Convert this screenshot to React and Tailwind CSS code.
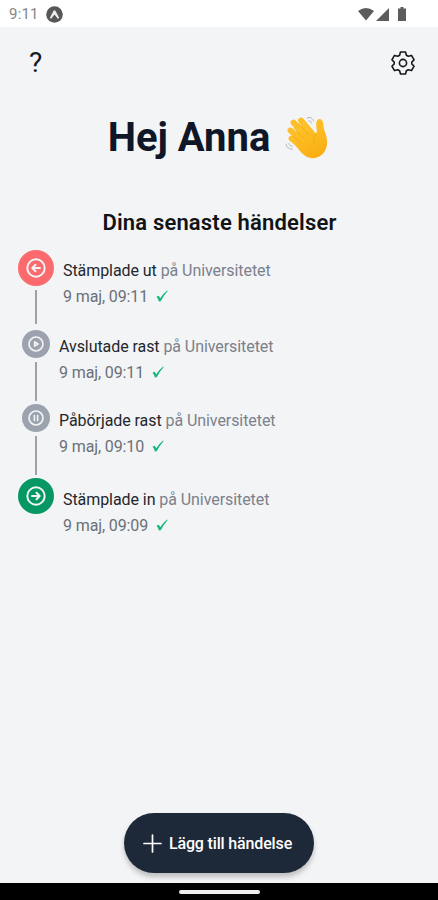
import React from "react";

const events = [
  { type: "out", title: "Stämplade ut", time: "9 maj, 09:11" },
  { type: "resume", title: "Avslutade rast", time: "9 maj, 09:11" },
  { type: "pause", title: "Påbörjade rast", time: "9 maj, 09:10" },
  { type: "in", title: "Stämplade in", time: "9 maj, 09:09" },
];

const styles = {
  out: {
    row: "h-20 pl-[18px]",
    circle: "size-9 bg-[#fb6b6d]",
    line: "h-[34px]",
    text: "pt-2",
  },
  resume: {
    row: "h-[74px] pl-[22px]",
    circle: "size-7 bg-[#9ca3af]",
    line: "h-[39px]",
    text: "pt-1",
  },
  pause: {
    row: "h-[74px] pl-[22px]",
    circle: "size-7 bg-[#9ca3af]",
    line: "h-[39px]",
    text: "pt-1",
  },
  in: {
    row: "h-20 pl-[18px]",
    circle: "size-9 bg-[#059862]",
    line: "",
    text: "pt-[9px]",
  },
};

const EventIcon = ({ type }) => {
  const large = type === "out" || type === "in";

  return (
    <svg
      className={large ? "size-5" : "size-4"}
      viewBox="0 0 20 20"
      fill="none"
      stroke="#f3f4f6"
      strokeLinecap="round"
      strokeLinejoin="round"
      strokeWidth={2}
    >
      <circle cx="10" cy="10" r="8.7" />
      {type === "out" && <path d="M14 10H6.5M9.5 6.8L6.3 10l3.2 3.2" />}
      {type === "in" && <path d="M6 10h7.5M10.5 6.8l3.2 3.2-3.2 3.2" />}
      {type === "resume" && <path d="M8.3 7.3v5.4l4.2-2.7z" />}
      {type === "pause" && <path d="M8 7v6M12 7v6" />}
    </svg>
  );
};

const GearIcon = () => (
  <svg
    className="size-6 text-[#16191e]"
    viewBox="0 0 24 24"
    fill="none"
    stroke="currentColor"
    strokeWidth="1.6"
    strokeLinejoin="round"
  >
    <path d="M9.5 1h5l.9 3.2 1.9 1.1 3.2-.9 2.6 4.4-2.3 2.3v1.8l2.3 2.3-2.6 4.4-3.2-.9-1.9 1.1-.9 3.2h-5l-.9-3.2-1.9-1.1-3.2.9L.9 15.2l2.3-2.3v-1.8L.9 8.8l2.6-4.4 3.2.9 1.9-1.1z" />
    <circle cx="12" cy="12" r="3.6" />
  </svg>
);

const WavingHand = () => (
  <svg className="h-[46px] w-[46px]" viewBox="0 0 46 46" fill="none">
    <defs>
      <linearGradient id="skin" x1="12" y1="6" x2="32" y2="43" gradientUnits="userSpaceOnUse">
        <stop stopColor="#ffc62e" />
        <stop offset="1" stopColor="#f9ae13" />
      </linearGradient>
    </defs>
    <g stroke="#fdbf28" strokeWidth="5.8" strokeLinecap="round">
      <path d="M17 5.5L31 22" />
      <path d="M9.5 7.5L27 28" />
      <path d="M6.5 15.5L24 32" />
      <path d="M7.5 23.5L24 37" />
    </g>
    <path
      d="M14 13L20 8L30.5 17.5C32 19 33.3 17.4 32.8 15C32 10.5 31.6 5 34.6 4.2C38.2 3.4 39.2 6.5 39.6 11.5C39.9 16 42.6 19.4 43 25C44 34.5 38.5 42 31 43C24.5 44 19.5 40.5 15.5 35.5L8 26Z"
      fill="url(#skin)"
    />
    <g stroke="#f0a616" strokeWidth="0.9" strokeLinecap="round">
      <path d="M14.5 8.5L24.5 19.5" />
      <path d="M10 13.5L20 23.5" />
      <path d="M9 21L17 28" />
      <path d="M32 19C29.5 21.5 29 25 30 28" />
    </g>
    <g stroke="#b3b7be" strokeWidth="1" strokeLinecap="round">
      <path d="M23 3C26 1.5 29 3 29.5 6" />
      <path d="M24.5 6C26 5 27 6 27.3 8" />
      <path d="M2 29C2.5 32.5 5 34.5 8.5 34" />
      <path d="M5 28.5C5.3 30.5 6.5 31.3 8.4 31.2" />
    </g>
  </svg>
);

const StatusBar = () => (
  <div className="flex h-[27px] items-center justify-between bg-white pt-px pr-[31px] pl-[9px]">
    <div className="flex items-center gap-[7px]">
      <span className="text-[15px] leading-5 tracking-[0.2px] text-[#858585]">9:11</span>
      <svg className="size-[17px]" viewBox="0 0 17 17">
        <circle cx="8.5" cy="8.5" r="8.3" fill="#575757" />
        <path
          d="M3.8 12L7.3 5.2Q8.5 3.3 9.7 5.2L13.2 12L11.8 12.7L8.5 8.4L5.2 12.7Z"
          fill="#eee"
        />
      </svg>
    </div>
    <svg className="h-[15px] w-[49px]" viewBox="0 0 49 15" fill="#5c5c5c">
      <path d="M0 4Q8-2 16 4L8 13.5Z" />
      <path d="M18 14L31 1v13Z" />
      <path d="M42.5 0h3v1.5H48V14h-8V1.5h2.5Z" />
    </svg>
  </div>
);

const TimelineEvent = ({ event }) => {
  const style = styles[event.type];

  return (
    <li className={`flex gap-[9px] ${style.row}`}>
      <div className="flex flex-col items-center gap-1">
        <div className={`flex shrink-0 items-center justify-center rounded-full ${style.circle}`}>
          <EventIcon type={event.type} />
        </div>
        {style.line && <div className={`w-[2px] shrink-0 bg-[#9ca3af] ${style.line}`} />}
      </div>
      <div className={`text-base leading-[26px] tracking-[-0.07px] whitespace-nowrap text-[#7b818b] ${style.text}`}>
        <p>
          <span className="text-[#24272c]">{event.title}</span> på Universitetet
        </p>
        <div className="flex items-center gap-[9px]">
          <span className="w-[84px] tracking-[-0.12px] text-[#6b7078]">{event.time}</span>
          <svg className="mb-0.5 h-3 w-3" viewBox="0 0 12 12" fill="#16b77b">
            <path d="M0.5 6.8L2.7 5.8L4.2 8.2Q7 3.6 11.2 0.4L11.7 0.9Q7.4 5.7 4.7 11.3L2.9 11.6Q2.2 8.6 0.5 6.8Z" />
          </svg>
        </div>
      </div>
    </li>
  );
};

const App = () => {
  return (
    <div className="flex h-[900px] w-[438px] flex-col overflow-hidden bg-[#f3f4f6] font-['Roboto',sans-serif]">
      <StatusBar />

      <header className="flex h-[72px] items-center justify-between pr-[23.5px] pl-[29px]">
        <span className="text-[28px] leading-none text-[#16191e]">?</span>
        <GearIcon />
      </header>

      <main className="flex-1">
        <div className="flex h-[76px] items-center justify-center gap-3.5 pt-0.5">
          <h1 className="text-[40px] font-bold whitespace-nowrap text-[#0e1628]">Hej Anna</h1>
          <WavingHand />
        </div>
        <h2 className="mt-8 pl-px text-center text-[22px] leading-8 font-semibold tracking-[0.18px] text-[#111315]">
          Dina senaste händelser
        </h2>
        <ul className="mt-[11px]">
          {events.map((event) => (
            <TimelineEvent key={event.type} event={event} />
          ))}
        </ul>
      </main>

      <div className="flex justify-center pb-[10px]">
        <button className="flex h-[60px] w-[190px] items-center justify-center gap-[7px] rounded-full bg-[#1d2938] pt-0.5 pr-[3px] text-base font-medium tracking-[-0.15px] whitespace-nowrap text-white shadow-[0_4px_5px_rgba(0,0,0,0.22)]">
          <svg className="mb-0.5 size-[19px]" viewBox="0 0 19 19" stroke="currentColor" strokeWidth="1.7" strokeLinecap="round">
            <path d="M9.5 1v17M1 9.5h17" />
          </svg>
          Lägg till händelse
        </button>
      </div>

      {/* System navigation handle */}
      <div className="flex h-[17px] items-center justify-center bg-black pt-px">
        <div className="h-1 w-[81px] rounded-full bg-[#eee]" />
      </div>
    </div>
  );
};

export default App;
